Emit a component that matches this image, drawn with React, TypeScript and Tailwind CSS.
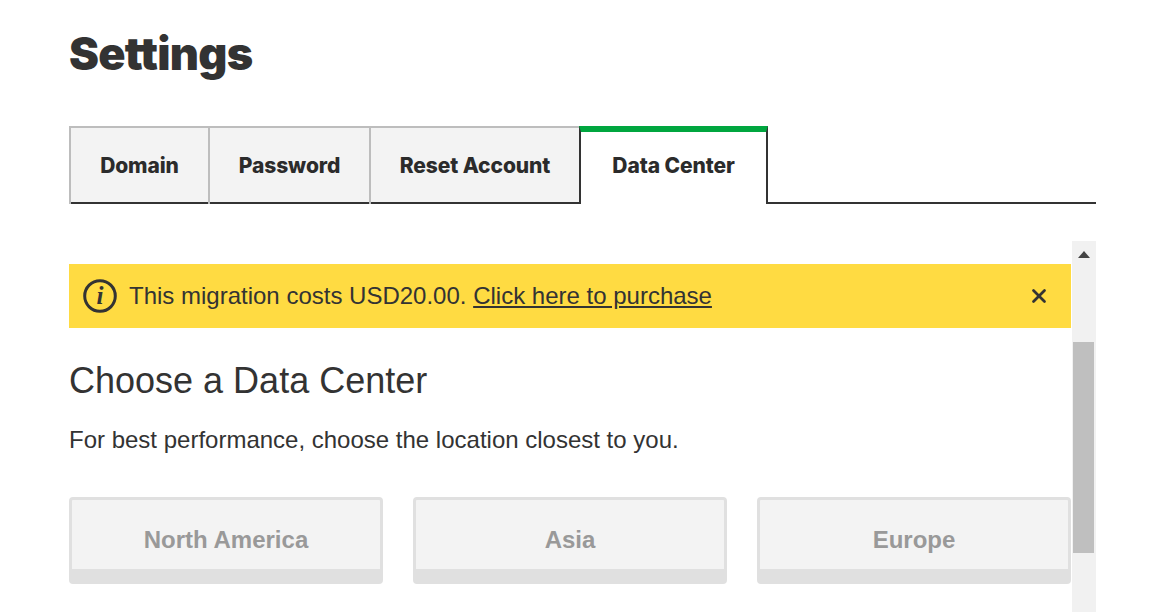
import { X } from 'lucide-react';

const tabs = [
  { label: 'Domain', width: 'w-[139px]' },
  { label: 'Password', width: 'w-[161px]' },
  { label: 'Reset Account', width: 'w-[210px]' },
];

const regions = ['North America', 'Asia', 'Europe'];

export default function App() {
  return (
    <div className="h-[612px] w-[1166px] overflow-hidden bg-white pl-[69px] pr-[70px] font-['Liberation_Sans',sans-serif] text-[#333]">
      {/* Page title */}
      <h1 className="pt-[25px] font-['Inter',sans-serif] text-[45px] leading-[58px] font-black tracking-[-0.75px] text-[#333]">
        Settings
      </h1>

      {/* Tabs */}
      <div className="mt-[43px] flex h-[78px] font-['Inter',sans-serif] text-[21px] font-extrabold tracking-[-0.1px] text-[#2b2b2b]">
        {tabs.map((tab) => (
          <button
            key={tab.label}
            className={`${tab.width} border-t-2 border-l-2 border-[#bdbdbd] bg-[#f3f3f3] shadow-[inset_0_-2px_0_#333]`}
          >
            {tab.label}
          </button>
        ))}
        <button className="w-[189px] border-t-[6px] border-r-2 border-l-2 border-t-[#00a63f] border-r-[#333] border-l-[#333] bg-white pb-[4px]">
          Data Center
        </button>
        <div className="flex-1 shadow-[inset_0_-2px_0_#333]" />
      </div>

      {/* Scrolling panel */}
      <div className="mt-[37px] flex h-[371px]">
        <div className="w-[1002px] pt-[23px]">
          <div className="flex h-[64px] items-center bg-[#ffdb42] pr-[21px] pl-[14px] text-[24px] text-[#333]">
            <svg viewBox="0 0 34 34" className="h-[34px] w-[34px] shrink-0">
              <circle cx="17" cy="17" r="15.3" fill="none" stroke="#333" strokeWidth="3" />
              <text
                x="17"
                y="25"
                textAnchor="middle"
                fontSize="25"
                fontStyle="italic"
                fontWeight="700"
                fontFamily="Liberation Serif, serif"
                fill="#333"
              >
                i
              </text>
            </svg>
            <span className="ml-[12px]">
              This migration costs USD20.00. <a className="underline">Click here to purchase</a>
            </span>
            <X className="ml-auto h-[22px] w-[22px]" strokeWidth={3} />
          </div>

          <h2 className="mt-[33px] text-[36px] leading-[40px] font-normal">Choose a Data Center</h2>
          <p className="mt-[26px] text-[24px] leading-[26px]">
            For best performance, choose the location closest to you.
          </p>

          <div className="mt-[44px] grid grid-cols-3 gap-[30px]">
            {regions.map((region) => (
              <button
                key={region}
                className="h-[87px] w-[314px] rounded-[4px] border-[3px] border-b-[15px] border-[#e0e0e0] bg-[#f3f3f3] pt-[10px] text-[24px] font-bold text-[#999]"
              >
                {region}
              </button>
            ))}
          </div>
        </div>

        {/* Scrollbar */}
        <div className="ml-px flex w-[24px] flex-col items-center bg-[#f1f1f1]">
          <svg viewBox="0 0 12 7" className="mt-[10px] mr-[1px] h-[7px] w-[12px]">
            <path d="M6 0 L12 7 L0 7 Z" fill="#444" />
          </svg>
          <div className="mt-[84px] mr-[2px] h-[211px] w-[21px] bg-[#bfbfbf]" />
        </div>
      </div>
    </div>
  );
}
